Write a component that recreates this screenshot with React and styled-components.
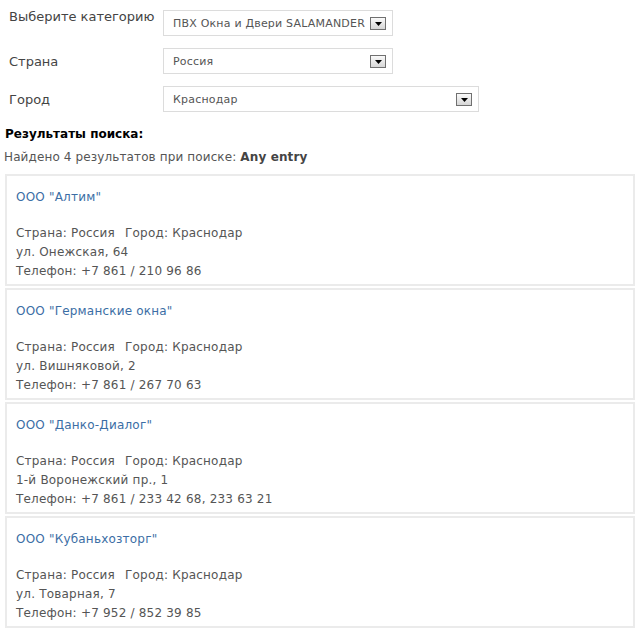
import React from "react";
import styled, { createGlobalStyle } from "styled-components";

const Global = createGlobalStyle`
  html, body { margin: 0; padding: 0; background: #fff; }
  body { font-family: "DejaVu Sans", Verdana, sans-serif; }
`;

const Page = styled.div`
  width: 642px;
  padding: 10px 0 8px 4px;
  box-sizing: border-box;
`;

const Form = styled.div`
  display: flex;
  flex-direction: column;
  gap: 12px;
  padding-left: 5px;
`;

const Row = styled.div`
  display: grid;
  grid-template-columns: 154px auto;
  align-items: ${(p) => (p.$top ? "start" : "center")};
`;

const Label = styled.div`
  font-size: 13px;
  color: #444;
  line-height: 16px;
  margin-top: ${(p) => (p.$top ? "-1px" : "1px")};
`;

const Select = styled.div`
  width: ${(p) => p.$w}px;
  height: 26px;
  box-sizing: border-box;
  border: 1px solid #dcdcdc;
  display: flex;
  align-items: center;
  justify-content: space-between;
  padding: 0 6px 0 9px;
  font-size: 11px;
  letter-spacing: 0.2px;
  color: #555;
  background: #fff;
`;

const Arrow = styled.span`
  width: 16px;
  height: 13px;
  box-sizing: border-box;
  border: 1px solid #707070;
  background: linear-gradient(#fafafa, #d6d6d6);
  display: flex;
  align-items: center;
  justify-content: center;
  padding-top: 2px;
`;

const Heading = styled.div`
  margin-top: 14px;
  font-size: 12px;
  font-weight: bold;
  color: #000;
  line-height: 16px;
  padding-left: 1px;
`;

const Summary = styled.div`
  margin-top: 7px;
  font-size: 12px;
  letter-spacing: 0.12px;
  color: #555;
  line-height: 16px;
  b { color: #444; }
`;

const List = styled.div`
  margin-top: 9px;
  display: flex;
  flex-direction: column;
  gap: 2px;
  padding-left: 1px;
`;

const Card = styled.div`
  width: 630px;
  box-sizing: border-box;
  border: 2px solid #ebebeb;
  padding: 12px 9px 3px;
  font-size: 12px;
  letter-spacing: 0.2px;
  color: #555;
  line-height: 19px;
`;

const Title = styled.a`
  display: block;
  color: #3b6ea5;
  text-decoration: none;
  margin-bottom: 17px;
`;

const Line = styled.div``;

const Gap = styled.span`
  display: inline-block;
  width: 10px;
`;

const ArrowIcon = () => (
  <Arrow>
    <svg width="7" height="4" viewBox="0 0 7 4">
      <path d="M0 0H7L3.5 4Z" fill="#000" />
    </svg>
  </Arrow>
);

const fields = [
  { label: "Выберите категорию", value: "ПВХ Окна и Двери SALAMANDER", w: 230, top: true },
  { label: "Страна", value: "Россия", w: 230 },
  { label: "Город", value: "Краснодар", w: 316 },
];

const results = [
  { name: 'ООО "Алтим"', addr: "ул. Онежская, 64", phone: "+7 861 / 210 96 86" },
  { name: 'ООО "Германские окна"', addr: "ул. Вишняковой, 2", phone: "+7 861 / 267 70 63" },
  { name: 'ООО "Данко-Диалог"', addr: "1-й Воронежский пр., 1", phone: "+7 861 / 233 42 68, 233 63 21" },
  { name: 'ООО "Кубаньхозторг"', addr: "ул. Товарная, 7", phone: "+7 952 / 852 39 85" },
];

export default function App() {
  return (
    <>
      <Global />
      <Page>
        <Form>
          {fields.map((f) => (
            <Row key={f.label} $top={f.top}>
              <Label $top={f.top}>{f.label}</Label>
              <Select $w={f.w}>
                <span>{f.value}</span>
                <ArrowIcon />
              </Select>
            </Row>
          ))}
        </Form>
        <Heading>Результаты поиска:</Heading>
        <Summary>
          Найдено 4 результатов при поиске: <b>Any entry</b>
        </Summary>
        <List>
          {results.map((r) => (
            <Card key={r.name}>
              <Title href="#">{r.name}</Title>
              <Line>
                Страна: Россия<Gap />Город: Краснодар
              </Line>
              <Line>{r.addr}</Line>
              <Line>Телефон: {r.phone}</Line>
            </Card>
          ))}
        </List>
      </Page>
    </>
  );
}
